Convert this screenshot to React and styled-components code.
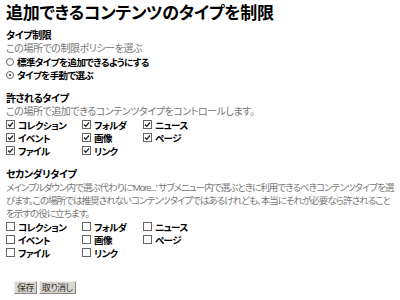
import React from 'react';
import styled, { createGlobalStyle } from 'styled-components';

const GlobalStyle = createGlobalStyle`
  body {
    margin: 0;
    background: #fff;
    font-family: "Liberation Sans", "Noto Sans CJK JP", sans-serif;
    font-feature-settings: "palt";
    color: #000;
  }
`;

const Page = styled.div`
  padding: 3px 4px 0 6px;
  width: 390px;
`;

const Title = styled.h1`
  margin: 0 0 4px;
  font-size: 17px;
  line-height: 22px;
  font-weight: bold;
  letter-spacing: -0.3px;
`;

const Field = styled.div`
  margin-bottom: 11px;
`;

const Label = styled.div`
  font-size: 10px;
  line-height: 13px;
  font-weight: bold;
  letter-spacing: -0.4px;
`;

const Help = styled.div`
  font-size: ${p => (p.$tight ? '9.5px' : '10px')};
  line-height: 13px;
  color: #777;
  letter-spacing: ${p => (p.$tight ? '-0.95px' : '-0.45px')};
`;

const Option = styled.label`
  display: flex;
  align-items: center;
  gap: 3px;
  height: 13px;
  font-size: 9.5px;
  font-weight: bold;
  letter-spacing: -0.6px;
  white-space: nowrap;
`;

const Radio = styled.span`
  width: 6px;
  height: 6px;
  border-radius: 50%;
  border: 1px solid #666;
  background: #fff;
  display: grid;
  place-items: center;
  flex: none;
  &::after {
    content: '';
    width: 2px;
    height: 2px;
    border-radius: 50%;
    background: ${p => (p.$on ? '#222' : 'transparent')};
  }
`;

const Box = styled.span`
  width: 7px;
  height: 7px;
  border: 1px solid #666;
  background: #fff;
  display: grid;
  place-items: center;
  flex: none;
  svg {
    display: block;
  }
`;

const Grid = styled.div`
  display: grid;
  grid-template-columns: 76px 61px auto;
`;

const Buttons = styled.div`
  display: flex;
  gap: 2px;
  margin: 22px 0 0 8px;
`;

const Button = styled.button`
  font-family: inherit;
  font-feature-settings: "palt";
  font-size: 9px;
  line-height: 10px;
  letter-spacing: -0.6px;
  height: 13px;
  padding: 0 2px;
  color: #333;
  background: #d8d5cf;
  border: 1px solid;
  border-color: #f0efec #8a8883 #8a8883 #f0efec;
`;

function Check({ on, children }) {
  return (
    <Option>
      <Box>
        {on && (
          <svg width="7" height="7" viewBox="0 0 7 7">
            <path d="M1 3.5 L2.8 5.3 L6 1.5" fill="none" stroke="#222" strokeWidth="1.3" />
          </svg>
        )}
      </Box>
      {children}
    </Option>
  );
}

const types = ['コレクション', 'フォルダ', 'ニュース', 'イベント', '画像', 'ページ', 'ファイル', 'リンク'];

function TypeGrid({ on }) {
  return (
    <Grid>
      {types.map(t => (
        <Check key={t} on={on}>{t}</Check>
      ))}
    </Grid>
  );
}

export default function App() {
  return (
    <>
      <GlobalStyle />
      <Page>
        <Title>追加できるコンテンツのタイプを制限</Title>
        <Field>
          <Label>タイプ制限</Label>
          <Help>この場所での制限ポリシーを選ぶ</Help>
          <Option>
            <Radio />
            標準タイプを追加できるようにする
          </Option>
          <Option>
            <Radio $on />
            タイプを手動で選ぶ
          </Option>
        </Field>
        <Field>
          <Label>許されるタイプ</Label>
          <Help>この場所で追加できるコンテンツタイプをコントロールします。</Help>
          <TypeGrid on />
        </Field>
        <Field>
          <Label>セカンダリタイプ</Label>
          <Help $tight>
            メインプルダウン内で選ぶ代わりに'More...' サブメニュー内で選ぶときに利用できるべきコンテンツタイプを選びます。この場所では推奨されないコンテンツタイプではあるけれども、本当にそれが必要なら許されることを示すの役に立ちます。
          </Help>
          <TypeGrid />
        </Field>
        <Buttons>
          <Button>保存</Button>
          <Button>取り消し</Button>
        </Buttons>
      </Page>
    </>
  );
}
